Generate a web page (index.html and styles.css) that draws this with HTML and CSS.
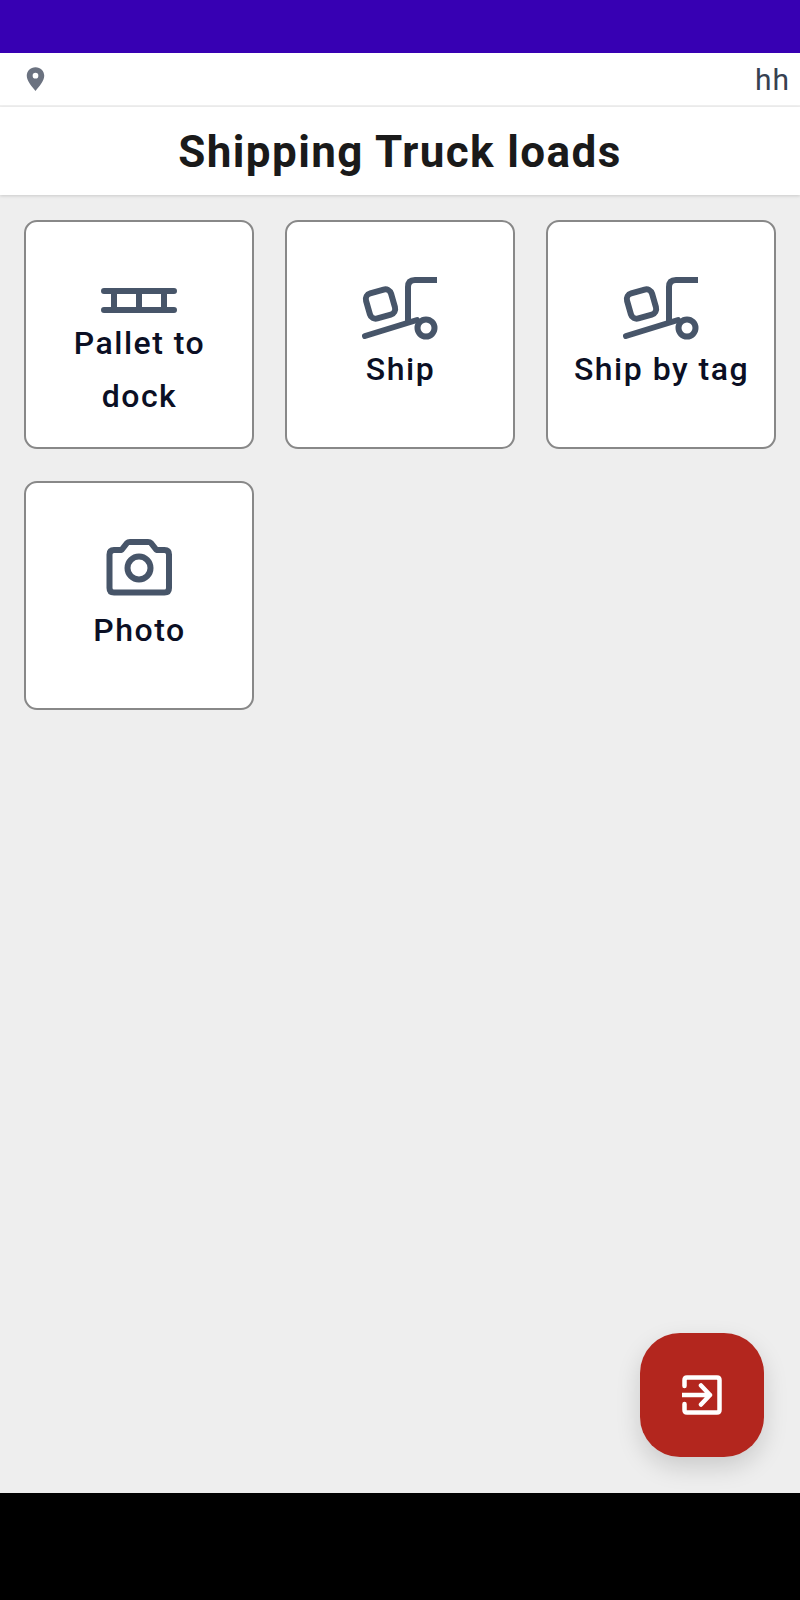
FILE: index.html
```html
<!DOCTYPE html>
<html lang="en">
<head>
  <meta charset="UTF-8" />
  <meta name="viewport" content="width=device-width, initial-scale=1.0"/>
  <title>Shipping Truck loads</title>
  <link rel="stylesheet" href="styles.css">
</head>
<body>
  <div class="status-bar"></div>

  <div class="info-bar">
    <svg class="pin" viewBox="0 0 20 26" width="19" height="26">
      <path fill-rule="evenodd" d="M10 0.500C4.600 0.500 0.800 4.500 0.800 9.600c0 5.600 5.600 11.600 9.200 15.900 3.600-4.300 9.200-10.300 9.200-15.900C19.200 4.500 15.400 0.500 10 0.500zM10 6.500a3 3 0 1 1 0 6 3 3 0 0 1 0-6z"/>
    </svg>
    <span class="user">hh</span>
  </div>

  <header class="title-bar">
    <h1>Shipping Truck loads</h1>
  </header>

  <main class="grid">
    <a class="tile">
      <svg class="tile-icon" viewBox="0 0 76 71" width="76" height="71">
        <path d="M3 45h70M3 64h70M13 45v19M38 45v19M63 45v19"/>
      </svg>
      <span>Pallet to dock</span>
    </a>
    <a class="tile">
      <svg class="tile-icon" viewBox="0 0 76 70" width="76" height="70">
        <path d="M3 63 L55 47"/>
        <path d="M46 49V14q0-7 7-7H75" class="cart-arm"/>
        <circle cx="64" cy="55" r="8.500"/>
        <rect x="5.500" y="18" width="26" height="26" rx="6" transform="rotate(-16 18.500 31)"/>
      </svg>
      <span>Ship</span>
    </a>
    <a class="tile">
      <svg class="tile-icon" viewBox="0 0 76 70" width="76" height="70">
        <path d="M3 63 L55 47"/>
        <path d="M46 49V14q0-7 7-7H75" class="cart-arm"/>
        <circle cx="64" cy="55" r="8.500"/>
        <rect x="5.500" y="18" width="26" height="26" rx="6" transform="rotate(-16 18.500 31)"/>
      </svg>
      <span>Ship by tag</span>
    </a>
    <a class="tile">
      <svg class="tile-icon" viewBox="0 0 68 70" width="68" height="70">
        <path d="M9 16h7.500l5.500-7q1-1 3-1h18q2 0 3 1l5.500 7h8q4.500 0 4.500 4.500v33.500q0 4.500-4.500 4.500H9q-4.500 0-4.500-4.500V20.500q0-4.500 4.500-4.500z"/>
        <circle cx="34" cy="34" r="11.500"/>
      </svg>
      <span>Photo</span>
    </a>
  </main>

  <button class="fab">
    <svg viewBox="0 0 40 40" width="40" height="40">
      <path d="M2.500 11V5q0-2.500 2.500-2.500h30q2.500 0 2.500 2.500v30q0 2.500-2.500 2.500H5q-2.500 0-2.500-2.500v-6"/>
      <path d="M0 20h28M19 10.500l9 9.500-9 9.500"/>
    </svg>
  </button>

  <div class="nav-bar"></div>
</body>
</html>
```

FILE: styles.css
```css
* { box-sizing: border-box; }
body {
  margin: 0; padding: 0;
  width: 800px; height: 1600px;
  background: #eeeeee;
  font-family: 'Roboto', sans-serif;
  display: flex; flex-direction: column;
  position: relative; overflow: hidden;
}
.status-bar {
  height: 53px;
  background: #3700b3;
}
.info-bar {
  height: 54px;
  background: #fff;
  border-bottom: 2px solid #f0f0f0;
  display: flex; align-items: center;
  justify-content: space-between;
  padding: 0 10px 0 26px;
}
.pin { fill: #6b7280; }
.user {
  font-size: 30px; color: #374151;
  letter-spacing: 1px;
}
.title-bar {
  height: 88px;
  padding-top: 2px;
  background: #fff;
  display: flex; align-items: center; justify-content: center;
  box-shadow: 0 1px 3px rgba(0,0,0,0.15);
}
h1 {
  margin: 0;
  font-size: 44px; font-weight: 700;
  color: #1a1a1a; letter-spacing: 1.4px;
}
.grid {
  flex: 1;
  display: grid;
  grid-template-columns: repeat(3, 229.5px);
  grid-auto-rows: 229px;
  gap: 32px 31.5px;
  padding: 25px 24px;
  align-content: start;
}
.tile {
  background: #fff;
  border: 2px solid #888888;
  border-radius: 13px;
  display: flex; flex-direction: column;
  align-items: center; justify-content: center;
  text-align: center;
  padding: 0 10px;
  font-size: 32px; font-weight: 500;
  line-height: 53px; letter-spacing: 1.5px;
  color: #0b0f24;
}
.tile span { padding-left: 1.5px; }
.tile-icon {
  fill: none; stroke: #475569;
  stroke-width: 6; stroke-linecap: round; stroke-linejoin: round;
}
.cart-arm { stroke-linecap: butt; }
.fab {
  position: absolute; left: 640px; top: 1333px;
  width: 124px; height: 124px;
  background: #b3261e;
  border: none; border-radius: 40px;
  padding: 0;
  box-shadow: 0 10px 24px rgba(0,0,0,0.15);
  display: flex; align-items: center; justify-content: center;
}
.fab svg {
  fill: none; stroke: #fff;
  stroke-width: 4.5; stroke-linecap: round; stroke-linejoin: round;
}
.nav-bar {
  height: 107px;
  background: #000;
}
```
